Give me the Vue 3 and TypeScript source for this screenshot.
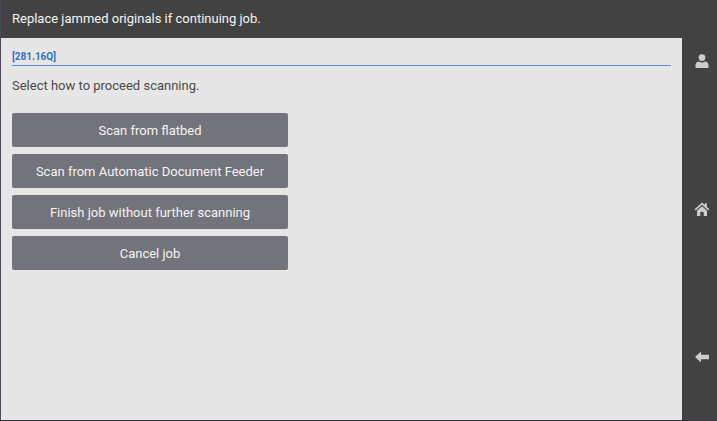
<script setup lang="ts">
interface ScanOption {
  id: string
  label: string
}

const options: ScanOption[] = [
  { id: 'flatbed', label: 'Scan from flatbed' },
  { id: 'feeder', label: 'Scan from Automatic Document Feeder' },
  { id: 'finish', label: 'Finish job without further scanning' },
  { id: 'cancel', label: 'Cancel job' },
]
</script>

<template>
  <div class="screen">
    <header class="title-bar">
      <h1 class="title">Replace jammed originals if continuing job.</h1>
    </header>
    <div class="body">
      <main class="panel">
        <p class="code">[281.16Q]</p>
        <p class="prompt">Select how to proceed scanning.</p>
        <div class="options">
          <button v-for="option in options" :key="option.id" type="button" class="option">
            {{ option.label }}
          </button>
        </div>
      </main>
      <nav class="rail">
        <button type="button" class="rail-button" aria-label="User">
          <svg viewBox="0 0 16 16" class="icon">
            <circle cx="8" cy="4.6" r="3.4" />
            <path d="M1.5 15v-2.6c0-2.4 1.4-3.9 3.4-3.9 1.8 1.2 4.4 1.2 6.2 0 2 0 3.4 1.5 3.4 3.9V15z" />
          </svg>
        </button>
        <button type="button" class="rail-button" aria-label="Home">
          <svg viewBox="0 0 16 16" class="icon">
            <path d="M8 1.4l2.9 2.7V2.2h2v3.8l2.5 2.3-1.1 1.2L8 3.7 1.7 9.5.6 8.3z" />
            <path d="M8 5.2l5 4.6V15H9.7v-4H6.3v4H3V9.8z" />
          </svg>
        </button>
        <button type="button" class="rail-button" aria-label="Back">
          <svg viewBox="0 0 16 16" class="icon">
            <path d="M1 8l6-5.4v3.2h8v4.4H7v3.2z" />
          </svg>
        </button>
      </nav>
    </div>
  </div>
</template>

<style>
body {
  margin: 0;
}
</style>

<style scoped>
.screen {
  box-sizing: border-box;
  display: flex;
  flex-direction: column;
  min-height: 100vh;
  border-left: 1px solid #4b4857;
  border-bottom: 1px solid #383543;
  background: #424242;
  font-family: Roboto, "Liberation Sans", sans-serif;
  font-size: 13px;
  line-height: 16px;
}

.title-bar {
  padding: 11px;
}

.title {
  margin: 0;
  color: #f4f4f4;
  font-size: 13px;
  font-weight: 400;
}

.body {
  display: flex;
  flex: 1;
}

.panel {
  flex: 1;
  padding: 13px 11px;
  background: #e6e6e6;
}

.code {
  margin: 0;
  border-bottom: 1px solid #5b8ccf;
  padding-bottom: 2px;
  color: #3470c2;
  font-size: 10px;
  font-weight: 700;
  line-height: 12px;
}

.prompt {
  margin: 12px 0 19px;
  color: #4a4a4a;
}

.options {
  display: grid;
  gap: 7px;
  max-width: 276px;
}

.option {
  height: 34px;
  border: 0;
  border-radius: 2px;
  padding: 2px 12px 0;
  background: #73737b;
  color: #f4f4f4;
  font: inherit;
}

.rail {
  display: flex;
  flex-direction: column;
  justify-content: space-between;
  padding: 7px 0 47px;
  width: 35px;
}

.rail-button {
  display: grid;
  place-items: center;
  height: 32px;
  border: 0;
  padding: 0 0 0 4px;
  background: transparent;
}

.icon {
  width: 16px;
  height: 16px;
  fill: #cdcdcd;
}
</style>
